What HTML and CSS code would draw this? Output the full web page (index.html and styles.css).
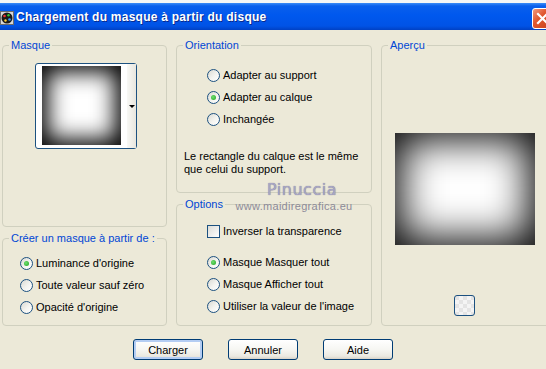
FILE: index.html
```html
<!DOCTYPE html>
<html lang="fr">
<head>
    <meta charset="UTF-8">
    <meta name="viewport" content="width=device-width, initial-scale=1.0">
    <title>Chargement du masque à partir du disque</title>
    <link rel="stylesheet" href="styles.css">
</head>
<body>

<div class="window">
    <div class="desk"></div>

    <div class="titlebar">
        <svg class="app-icon" width="14" height="14" viewBox="0 0 14 14">
            <rect x="0.5" y="0.5" width="13" height="13" fill="#d8d8d8" stroke="#6b6b6b"/>
            <circle cx="7" cy="7" r="5.5" fill="#1a1a1a"/>
            <circle cx="4.5" cy="5" r="1.3" fill="#e33"/>
            <circle cx="8.5" cy="4.2" r="1.2" fill="#3c3"/>
            <circle cx="9.5" cy="8.5" r="1.3" fill="#39f"/>
            <circle cx="5.5" cy="9.5" r="1.2" fill="#fc3"/>
        </svg>
        <span class="title">Chargement du masque à partir du disque</span>
        <span class="close">
            <svg width="13" height="13" viewBox="0 0 13 13">
                <path d="M2 2 L11 11 M11 2 L2 11" stroke="#fff" stroke-width="2.2" stroke-linecap="square"/>
            </svg>
        </span>
    </div>

    <div class="groups">
        <div class="col">
            <fieldset class="group group-mask">
                <legend>Masque</legend>
                <div class="thumb">
                    <div class="thumb-image"></div>
                    <div class="thumb-arrow"></div>
                </div>
            </fieldset>
            <fieldset class="group group-source">
                <legend>Créer un masque à partir de :</legend>
                <div class="choices">
                    <div class="choice"><span class="radio checked"></span>Luminance d'origine</div>
                    <div class="choice"><span class="radio"></span>Toute valeur sauf zéro</div>
                    <div class="choice"><span class="radio"></span>Opacité d'origine</div>
                </div>
            </fieldset>
        </div>

        <div class="col">
            <fieldset class="group group-orient">
                <legend>Orientation</legend>
                <div class="choices">
                    <div class="choice"><span class="radio"></span>Adapter au support</div>
                    <div class="choice"><span class="radio checked"></span>Adapter au calque</div>
                    <div class="choice"><span class="radio"></span>Inchangée</div>
                </div>
                <p class="note">Le rectangle du calque est le même<br>que celui du support.</p>
            </fieldset>
            <fieldset class="group group-options">
                <legend>Options</legend>
                <div class="choices">
                    <div class="choice"><span class="check"></span>Inverser la transparence</div>
                </div>
                <div class="choices choices-gap">
                    <div class="choice"><span class="radio checked"></span>Masque Masquer tout</div>
                    <div class="choice"><span class="radio"></span>Masque Afficher tout</div>
                    <div class="choice"><span class="radio"></span>Utiliser la valeur de l'image</div>
                </div>
            </fieldset>
        </div>

        <fieldset class="group group-preview">
            <legend>Aperçu</legend>
            <div class="preview"></div>
            <div class="tiny-btn"></div>
        </fieldset>
    </div>

    <div class="buttons">
        <button class="btn btn-default">Charger</button>
        <button class="btn">Annuler</button>
        <button class="btn">Aide</button>
    </div>

    <div class="watermark">
        <span class="wm-name">Pinuccia</span>
        <span class="wm-url">www.maidiregrafica.eu</span>
    </div>
</div>

</body>
</html>
```

FILE: styles.css
```css
body {
    margin: 0;
    overflow: hidden;
    background: #ece9d8;
    font-family: "Liberation Sans", Arial, sans-serif;
    font-size: 11px;
    color: #000;
}
.window {
    position: relative;
    width: 562px;
    height: 369px;
    background: #ece9d8;
}
.desk {
    height: 3px;
    background: #f6f6f6;
}

/* barre de titre */
.titlebar {
    display: flex;
    align-items: center;
    height: 27px;
    background: linear-gradient(#3b8cf7 0, #0a5fec 3px, #0058ee 45%, #0053e6 85%, #0041c4 100%);
}
.app-icon {
    margin: 2px 2px 0 0;
}
.title {
    font-weight: bold;
    font-size: 12px;
    color: #fff;
    text-shadow: 1px 1px 0 #0a2a8c;
    letter-spacing: 0.25px;
}
.close {
    display: flex;
    align-items: center;
    justify-content: center;
    width: 19px;
    height: 19px;
    margin: 3px 9px 0 auto;
    border: 1px solid #fff;
    border-radius: 3px;
    background: linear-gradient(135deg, #f29a7f 0, #e0572f 40%, #c8401a 100%);
}

/* groupes */
.groups {
    display: grid;
    grid-template-columns: 165px 196px 172px;
    column-gap: 9px;
    height: 287px;
    margin: 9px 0 0 2px;
}
.col {
    display: flex;
    flex-direction: column;
    gap: 5px;
}
.group {
    margin: 0;
    padding: 0;
    min-width: 0;
    border: 1px solid #d0d0bf;
    border-radius: 4px;
}
.group legend {
    margin-left: 6px;
    padding: 0 2px;
    line-height: 13px;
    color: #0046d5;
}
.group-mask { height: 186px; }
.group-source { flex: 1; }
.group-orient { height: 152px; }
.group-options { flex: 1; }

.thumb {
    display: flex;
    box-sizing: border-box;
    width: 102px;
    height: 86px;
    margin: 11px 0 0 32px;
    border: 1px solid #1c5180;
    border-radius: 3px;
    background: #fff;
}
.thumb-image {
    width: 79px;
    height: 79px;
    margin: 2px 0 0 6px;
    background: #fff;
    box-shadow: inset 0 0 22px 6px #000;
}
.thumb-arrow {
    display: flex;
    align-items: center;
    justify-content: center;
    width: 9px;
    margin-left: 6px;
    background: linear-gradient(90deg, #f8f8f5, #e8e6de);
}
.thumb-arrow::after {
    content: "";
    border-left: 3px solid transparent;
    border-right: 3px solid transparent;
    border-top: 3px solid #000;
}

.choices {
    display: flex;
    flex-direction: column;
}
.choice {
    display: flex;
    align-items: center;
    height: 22px;
}
.group-source .choices { margin: 7px 0 0 17px; }
.group-orient .choices { margin: 12px 0 0 30px; }
.group-options .choices { margin: 9px 0 0 30px; }
.group-options .choices-gap { margin-top: 9px; }

.radio {
    position: relative;
    box-sizing: border-box;
    width: 13px;
    height: 13px;
    margin-right: 3px;
    border: 1px solid #1c5180;
    border-radius: 50%;
    background: linear-gradient(135deg, #d9d9d2 0, #f4f4f0 55%, #fff 100%);
}
.radio.checked::after {
    content: "";
    position: absolute;
    left: 3px;
    top: 3px;
    width: 5px;
    height: 5px;
    border-radius: 50%;
    background: radial-gradient(circle at 40% 40%, #6fe06f, #21a121);
}
.check {
    box-sizing: border-box;
    width: 13px;
    height: 13px;
    margin-right: 3px;
    border: 1px solid #1c5180;
    background: linear-gradient(135deg, #dcdcd7, #fff);
}

.note {
    margin: 20px 0 0 7px;
    line-height: 13px;
}

.preview {
    width: 140px;
    height: 112px;
    margin: 81px 0 0 13px;
    background: #fff;
    box-shadow: inset 0 0 40px 6px #000;
}
.tiny-btn {
    box-sizing: border-box;
    width: 21px;
    height: 21px;
    margin: 50px 0 0 72px;
    border: 1px solid #1c5180;
    border-radius: 3px;
    background: repeating-conic-gradient(#f4f4f4 0 25%, #e4e4e4 0 50%) 0 0 / 8px 8px;
}

/* boutons */
.buttons {
    display: flex;
    gap: 25px;
    margin: 13px 0 0 133px;
}
.btn {
    box-sizing: border-box;
    width: 70px;
    height: 21px;
    padding: 0;
    border: 1px solid #003c74;
    border-radius: 3px;
    background: linear-gradient(#fff 0, #f6f6f2 50%, #ebe9e1 85%, #d8d3c8 100%);
    font-family: "Liberation Sans", Arial, sans-serif;
    font-size: 11px;
    color: #000;
}
.btn-default {
    box-shadow: inset 0 0 0 2px #b4cdf3;
}

/* filigrane */
.watermark {
    position: absolute;
    left: 236px;
    top: 180px;
    display: flex;
    flex-direction: column;
    align-items: center;
    width: 116px;
    pointer-events: none;
}
.wm-name {
    margin-left: 16px;
    font-family: "DejaVu Sans", sans-serif;
    font-size: 16px;
    letter-spacing: 0.5px;
    color: #a8a6c4;
    text-shadow: 0 0 1px #6e6c8a;
}
.wm-url {
    margin-top: 1px;
    font-size: 11px;
    letter-spacing: 0.3px;
    color: #8d8b98;
}
```
